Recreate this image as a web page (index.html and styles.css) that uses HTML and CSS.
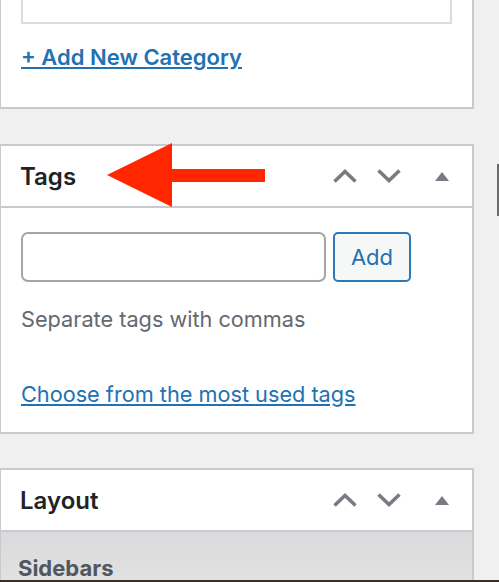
FILE: index.html
```html
<!DOCTYPE html>
<html lang="en">
<head>
<meta charset="utf-8">
<title>Tags</title>
<link rel="stylesheet" href="styles.css">
</head>
<body>
<div class="page">
  <div class="main">
    <div class="column">
      <section class="panel panel-cat">
        <div class="cat-body">
          <div class="cat-box"></div>
          <a class="add-cat" href="#">+ Add New Category</a>
        </div>
      </section>

      <section class="panel panel-tags">
        <header class="panel-head">
          <h2 class="panel-title">Tags</h2>
          <div class="handles">
            <span class="handle"><svg width="24" height="14" viewBox="0 0 24 14"><polyline points="1.5,12.5 12,2.5 22.5,12.5" fill="none" stroke="#787c82" stroke-width="3.6"/></svg></span>
            <span class="handle"><svg width="24" height="14" viewBox="0 0 24 14"><polyline points="1.5,1.5 12,11.5 22.5,1.5" fill="none" stroke="#787c82" stroke-width="3.6"/></svg></span>
            <span class="handle handle-toggle"><svg width="14" height="9" viewBox="0 0 14 9"><polygon points="0,9 7,0 14,9" fill="#787c82"/></svg></span>
          </div>
        </header>
        <div class="tags-body">
          <div class="tag-row">
            <input class="tag-input" type="text" aria-label="Add New Tag">
            <button class="btn-add" type="button">Add</button>
          </div>
          <p class="desc">Separate tags with commas</p>
          <p class="cloud"><a href="#">Choose from the most used tags</a></p>
        </div>
      </section>

      <section class="panel panel-layout">
        <header class="panel-head">
          <h2 class="panel-title">Layout</h2>
          <div class="handles">
            <span class="handle"><svg width="24" height="14" viewBox="0 0 24 14"><polyline points="1.5,12.5 12,2.5 22.5,12.5" fill="none" stroke="#787c82" stroke-width="3.6"/></svg></span>
            <span class="handle"><svg width="24" height="14" viewBox="0 0 24 14"><polyline points="1.5,1.5 12,11.5 22.5,1.5" fill="none" stroke="#787c82" stroke-width="3.6"/></svg></span>
            <span class="handle handle-toggle"><svg width="14" height="9" viewBox="0 0 14 9"><polygon points="0,9 7,0 14,9" fill="#787c82"/></svg></span>
          </div>
        </header>
        <div class="layout-body">
          <h3 class="tab-title">Sidebars</h3>
        </div>
      </section>
    </div>
    <div class="gutter"><div class="edge-line"></div></div>
  </div>
  <div class="strip"></div>

  <svg class="arrow" width="158" height="64" viewBox="0 0 158 64"><polygon points="0,32 65,0 65,26 158,26 158,39 65,39 65,64" fill="#ff2600"/></svg>
</div>
</body>
</html>
```

FILE: styles.css
```css
* { box-sizing: border-box; }

html, body {
  margin: 0;
  height: 582px;
  overflow: hidden;
  background: #f0f0f1;
  font-family: Inter, "Liberation Sans", sans-serif;
}

.page {
  position: relative;
  height: 582px;
}

.main {
  display: flex;
  height: 580px;
}

.column {
  flex: none;
  width: 475px;
  margin-left: -1px;
}

.gutter {
  flex: 1;
  display: flex;
  flex-direction: column;
  align-items: flex-end;
  padding-top: 164px;
}

.edge-line {
  width: 2px;
  height: 52px;
  background: #6b6b6b;
}

.strip {
  height: 2px;
  background: #3a2e24;
}

.panel {
  background: #fff;
  border: 2px solid #c9cacd;
}

.panel-cat { border-top: none; }
.panel-tags { margin-top: 35px; }
.panel-layout { margin-top: 34px; border-bottom: none; height: 112px; overflow: hidden; }

.cat-body {
  padding: 0 20px 35px 20px;
}

.cat-box {
  height: 24px;
  border: 2px solid #dcdcde;
  border-top: none;
}

.add-cat {
  display: block;
  margin-top: 18px;
  line-height: 30px;
  font-size: 22px;
  font-weight: 600;
  color: #2271b1;
  text-decoration: underline;
}

.panel-head {
  display: flex;
  align-items: center;
  height: 62px;
  padding-left: 19px;
  border-bottom: 2px solid #c9cacd;
}

.panel-title {
  flex: 1;
  margin: 0;
  font-size: 24px;
  font-weight: 600;
  color: #1d2327;
}

.handles {
  display: flex;
  align-self: stretch;
}

.handle {
  width: 44px;
  display: flex;
  align-items: center;
  justify-content: center;
}

.handle-toggle { width: 61px; }

.tags-body {
  padding: 24px 20px 23px 20px;
}

.tag-row {
  display: flex;
  gap: 7px;
}

.tag-input {
  width: 305px;
  height: 50px;
  border: 2px solid #a2a5a9;
  border-radius: 7px;
  background: #fff;
  margin: 0;
}

.btn-add {
  width: 78px;
  height: 50px;
  margin: 0;
  padding: 0;
  border: 2px solid #2f78b8;
  border-radius: 5px;
  background: #f6f7f7;
  color: #2271b1;
  font-family: inherit;
  font-size: 22px;
}

.desc {
  margin: 22px 0 0;
  line-height: 30px;
  font-size: 21.7px;
  color: #646970;
}

.cloud {
  margin: 45px 0 0;
  line-height: 30px;
  font-size: 21.7px;
}

.cloud a {
  color: #2271b1;
  text-decoration: underline;
}

.layout-body {
  height: 48px;
  padding: 24px 0 0 17px;
  background: linear-gradient(#dadadc, #e1e1e2);
  overflow: hidden;
}

.tab-title {
  margin: 0;
  line-height: 24px;
  font-size: 22px;
  font-weight: 700;
  color: #50575e;
}

.arrow {
  position: absolute;
  left: 107px;
  top: 143px;
}
```
